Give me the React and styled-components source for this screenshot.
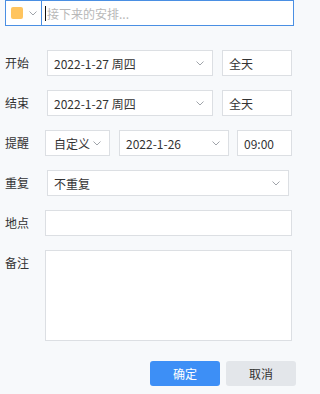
import React from "react";
import styled, { createGlobalStyle } from "styled-components";

const GlobalStyle = createGlobalStyle`
  body {
    margin: 0;
    background: #f7f9fb;
    font-family: "Noto Sans CJK SC", "Noto Sans", sans-serif;
    font-size: 12px;
    color: #333;
  }
`;

const Page = styled.div`
  width: 299px;
  height: 394px;
  box-sizing: border-box;
  padding: 0 0 0 5px;
  overflow: hidden;
`;

const TitleBar = styled.div`
  display: flex;
  width: 289px;
  height: 26px;
  box-sizing: border-box;
  border: 1px solid #4a8fe3;
  background: #fff;
`;

const ColorPick = styled.div`
  width: 36px;
  flex-shrink: 0;
  display: flex;
  align-items: center;
  padding-left: 5px;
  gap: 6px;
  box-sizing: border-box;
  border-right: 1px solid #4a8fe3;
`;

const Swatch = styled.span`
  display: block;
  flex: 0 0 12px;
  width: 12px;
  min-width: 12px;
  height: 12px;
  border-radius: 2px;
  background: ${(p) => p.color};
`;

const TitleInput = styled.div`
  flex: 1;
  display: flex;
  align-items: center;
  padding-left: 3px;
  color: #b8b8b8;
`;

const Caret = styled.span`
  width: 1px;
  height: 15px;
  background: #111;
  margin-right: 1px;
`;

const Form = styled.div`
  margin-top: 24px;
  display: flex;
  flex-direction: column;
  gap: 14px;
`;

const Row = styled.div`
  display: flex;
  align-items: ${(p) => (p.top ? "flex-start" : "center")};
  gap: 9px;
`;

const Label = styled.div`
  width: ${(p) => p.w || 42}px;
  flex-shrink: 0;
  line-height: 26px;
  margin-right: -9px;
`;

const Box = styled.div`
  width: ${(p) => p.w}px;
  height: ${(p) => p.h || 26}px;
  flex-shrink: 0;
  box-sizing: border-box;
  border: 1px solid #dcdfe3;
  background: #fff;
  display: flex;
  align-items: center;
  justify-content: space-between;
  padding: 0 ${(p) => p.pr || 8}px 0 ${(p) => p.pl || 6}px;
  margin-left: ${(p) => p.ml || 0}px;
  white-space: nowrap;
`;

const Chevron = styled.svg`
  display: block;
  width: 8px;
  height: 5px;
  flex-shrink: 0;
`;

const Footer = styled.div`
  margin-top: 20px;
  display: flex;
  gap: 6px;
  padding-left: 145px;
`;

const Button = styled.button`
  width: 70px;
  height: 25px;
  border: none;
  border-radius: 3px;
  font: inherit;
  background: ${(p) => (p.primary ? "#3d8ff6" : "#e3e6ea")};
  color: ${(p) => (p.primary ? "#fff" : "#333")};
  padding: 0;
`;

const Arrow = () => (
  <Chevron viewBox="0 0 8 5">
    <path d="M0.5 0.5 L4 4 L7.5 0.5" fill="none" stroke="#a0a4aa" strokeWidth="1" />
  </Chevron>
);

const Select = ({ children, ...rest }) => (
  <Box {...rest}>
    <span>{children}</span>
    <Arrow />
  </Box>
);

export default function App() {
  return (
    <Page>
      <GlobalStyle />
      <TitleBar>
        <ColorPick>
          <Swatch color="#ffc45e" />
          <Arrow />
        </ColorPick>
        <TitleInput>
          <Caret />
          接下来的安排...
        </TitleInput>
      </TitleBar>

      <Form>
        <Row>
          <Label>开始</Label>
          <Select w={166}>2022-1-27 周四</Select>
          <Box w={70}>全天</Box>
        </Row>
        <Row>
          <Label>结束</Label>
          <Select w={166}>2022-1-27 周四</Select>
          <Box w={70}>全天</Box>
        </Row>
        <Row>
          <Label w={40}>提醒</Label>
          <Select w={65} pl={8}>自定义</Select>
          <Select w={110}>2022-1-26</Select>
          <Box w={55} ml={-1}>09:00</Box>
        </Row>
        <Row>
          <Label>重复</Label>
          <Select w={242}>不重复</Select>
        </Row>
        <Row>
          <Label w={40}>地点</Label>
          <Box w={247} />
        </Row>
        <Row top>
          <Label w={40}>备注</Label>
          <Box w={247} h={91} />
        </Row>
      </Form>

      <Footer>
        <Button primary>确定</Button>
        <Button>取消</Button>
      </Footer>
    </Page>
  );
}
